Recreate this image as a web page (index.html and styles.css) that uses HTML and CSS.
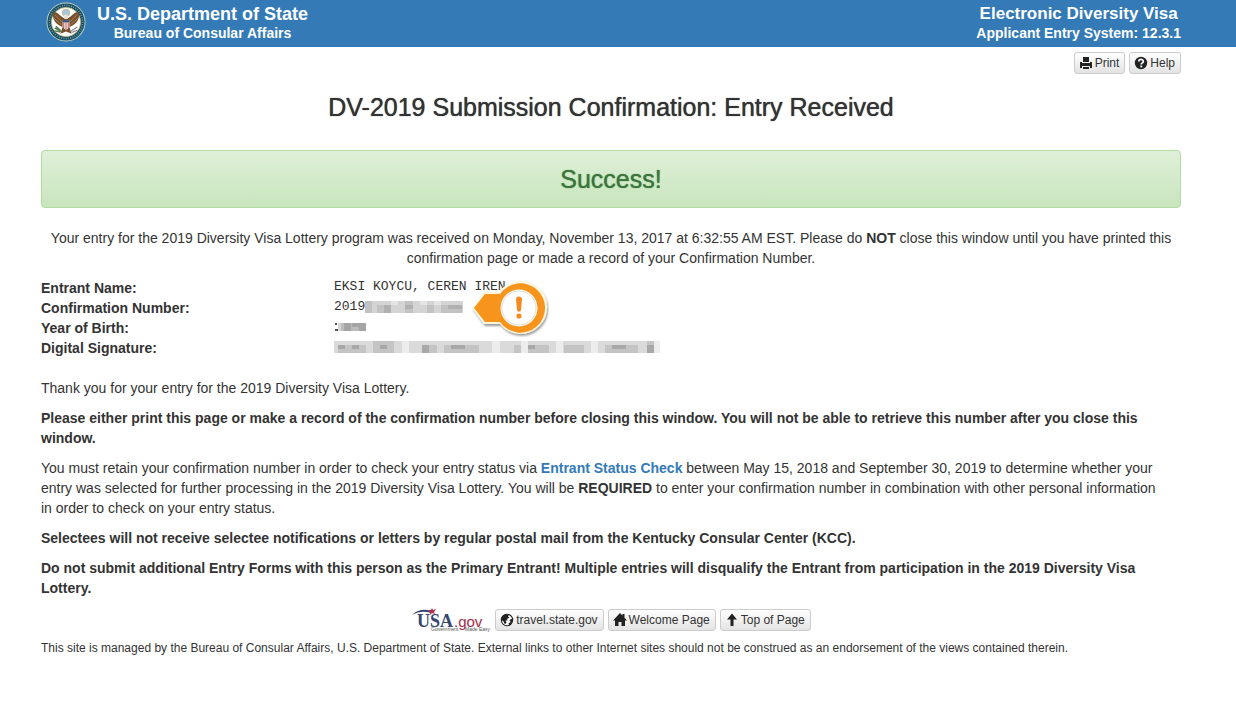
FILE: index.html
```html
<!DOCTYPE html>
<html lang="en">
  <head>
    <meta charset="UTF-8" />
    <meta name="viewport" content="width=device-width, initial-scale=1.0" />
    <title>Electronic Diversity Visa</title>
    <link rel="stylesheet" href="styles.css" />
  </head>
  <body>
    <header class="site-header" id="top">
      <div class="brand">
        <svg class="seal" viewBox="0 0 40 40" role="img" aria-label="Department of State seal">
          <circle cx="20" cy="20" r="19.5" fill="#c5d3c6" />
          <circle cx="20" cy="20" r="18.6" fill="#174e63" />
          <circle cx="20" cy="20" r="16.6" fill="none" stroke="#6f9c9b" stroke-width="1.6" stroke-dasharray="1 1.3" />
          <circle cx="20" cy="20" r="14.6" fill="#fff" stroke="#c9bd8b" stroke-width="0.8" />
          <g transform="translate(-2.6 -2.2) scale(1.13)">
            <circle cx="20" cy="11.5" r="3.3" fill="#a9c6dc" stroke="#c9b878" stroke-width="0.7" />
            <path d="M18 16 C15 15 12 10 9 11 C7 15 10 22 17 24 L15 30 L20 28 L25 30 L23 24 C30 22 33 15 31 11 C28 10 25 15 22 16 L20 13 Z" fill="#79502f" />
            <path d="M10 13 L17 20 M9 16 L16 22 M30 13 L23 20 M31 16 L24 22" stroke="#b38a52" stroke-width="0.8" />
            <path d="M18 14 L20 12.5 L22 14.5 L21.5 17 H18.5 Z" fill="#e9e4d5" />
            <path d="M17 18 H23 V24 L20 27 L17 24 Z" fill="#f2ecec" />
            <path d="M17 18 H23 V20 H17 Z" fill="#31517d" />
            <path d="M18 20 V25 M20 20 V27 M22 20 V25" stroke="#b94e45" stroke-width="0.8" />
            <path d="M10 25 L16 28 M10 27.5 L15 28.5 M11 23.5 L15 27" stroke="#4f7b4e" stroke-width="1.3" />
            <path d="M24 28 L30 24 M25 29 L30 27" stroke="#888" stroke-width="1" />
          </g>
        </svg>
        <div class="title-block">
          <div class="title">U.S. Department of State</div>
          <div class="subtitle">Bureau of Consular Affairs</div>
        </div>
      </div>
      <div class="title-block system">
        <div class="title">Electronic Diversity Visa</div>
        <div class="subtitle">Applicant Entry System: 12.3.1</div>
      </div>
    </header>

    <main>
      <div class="toolbar">
        <button type="button" class="btn">
          <svg class="icon" viewBox="0 0 14 14" aria-hidden="true">
            <path d="M4 1 H10 V6 H4 Z M1 6 H3 V7 H11 V6 H13 V12 H11 V10 H3 V12 H1 Z M4 11 H10 V13 H4 Z" fill="#222" />
          </svg>
          Print
        </button>
        <button type="button" class="btn">
          <svg class="icon" viewBox="0 0 14 14" aria-hidden="true">
            <circle cx="7" cy="7" r="6.2" fill="#222" />
            <path d="M4.8 5.6 C4.8 2.5 9.3 2.6 9.3 5.4 C9.3 7 7.2 6.8 7.2 8.6" fill="none" stroke="#fff" stroke-width="1.7" />
            <path d="M6.3 9.6 H8.2 V11.3 H6.3 Z" fill="#fff" />
          </svg>
          Help
        </button>
      </div>

      <h1 class="page-title">DV-2019 Submission Confirmation: Entry Received</h1>

      <div class="alert">
        <h2 class="alert-title">Success!</h2>
      </div>

      <p class="intro">
        Your entry for the 2019 Diversity Visa Lottery program was received on Monday, November 13, 2017 at 6:32:55 AM EST. Please do <strong>NOT</strong> close this window until you have printed this confirmation page or made a record of your Confirmation Number.
      </p>

      <dl class="details">
        <dt>Entrant Name:</dt>
        <dd>EKSI KOYCU, CEREN IREN</dd>
        <dt>Confirmation Number:</dt>
        <dd class="has-marker">
          2019<svg class="redacted" width="98" height="12" viewBox="0 0 98 12" aria-hidden="true">
            <path d="M0 0 H98 V12 H0 Z" fill="#d4d4d4" />
            <path d="M0 0 H7 V12 H0 Z M12 4 H26 V12 H12 Z M40 0 H48 V12 H40 Z M62 4 H69 V12 H62 Z M76 4 H97 V12 H76 Z" fill="#c2c2c2" />
            <path d="M19 4 H26 V12 H19 Z M40 4 H48 V8 H40 Z M83 4 H97 V8 H83 Z" fill="#b0b0b0" />
            <path d="M26 0 H33 V4 H26 Z M55 0 H62 V4 H55 Z M69 0 H76 V4 H69 Z" fill="#e5e5e5" />
          </svg>
          <svg class="marker" width="80" height="62" viewBox="0 0 80 62" role="img" aria-label="Attention">
            <defs>
              <filter id="shadow" x="-20%" y="-20%" width="140%" height="140%">
                <feDropShadow dx="1" dy="2" stdDeviation="1" flood-color="#000" flood-opacity="0.4" />
              </filter>
            </defs>
            <g filter="url(#shadow)">
              <path d="M3 31 L15 15 H30 A26.5 26.5 0 1 1 31 47 H15 Z" fill="#fff6df" />
              <path d="M5 31 L16 17 H31 A24.7 24.7 0 1 1 31 45 H16 Z" fill="#f7941e" />
            </g>
            <circle cx="50" cy="31" r="18.5" fill="#fff" />
            <circle cx="50" cy="31" r="17" fill="none" stroke="#e7dccb" stroke-width="1" />
            <path d="M47 22 C47 18.500 53 18.500 53 22 L52 33 C51.700 35 48.300 35 48 33 Z" fill="#f58a1f" />
            <circle cx="50" cy="39" r="2.6" fill="#f58a1f" />
          </svg>
        </dd>
        <dt>Year of Birth:</dt>
        <dd>
          <svg class="redacted" width="34" height="10" viewBox="0 0 34 10" aria-hidden="true">
            <path d="M1 1 H3 V3 H1 Z M1 7 H4 V9 H1 Z" fill="#555" />
            <path d="M4 1 H32 V9 H4 Z" fill="#bbb" />
            <path d="M10 1 H17 V9 H10 Z M18 1 H25 V5 H18 Z M25 1 H32 V9 H25 Z" fill="#a4a4a4" />
            <path d="M4 1 H7 V9 H4 Z" fill="#d5d5d5" />
          </svg>
        </dd>
        <dt>Digital Signature:</dt>
        <dd>
          <svg class="redacted" width="326" height="12" viewBox="0 0 326 12" aria-hidden="true">
            <path d="M0 0 H326 V12 H0 Z" fill="#dadada" />
            <path d="M4 4 H32 V12 H4 Z M39 0 H60 V12 H39 Z M88 4 H103 V12 H88 Z M110 4 H145 V12 H110 Z M180 4 H187 V12 H180 Z M194 4 H215 V12 H194 Z M230 4 H250 V12 H230 Z M271 4 H304 V12 H271 Z M313 0 H320 V12 H313 Z" fill="#c4c4c4" />
            <path d="M4 4 H11 V8 H4 Z M18 4 H25 V8 H18 Z M46 4 H53 V8 H46 Z M88 4 H95 V12 H88 Z M117 4 H131 V8 H117 Z M194 4 H201 V8 H194 Z M278 4 H292 V8 H278 Z M313 4 H320 V12 H313 Z" fill="#a8a8a8" />
            <path d="M68 0 H75 V12 H68 Z M158 0 H166 V12 H158 Z M187 0 H194 V12 H187 Z M222 0 H229 V12 H222 Z M257 0 H264 V12 H257 Z M320 0 H326 V12 H320 Z" fill="#ececec" />
          </svg>
        </dd>
      </dl>

      <div class="instructions">
        <p>Thank you for your entry for the 2019 Diversity Visa Lottery.</p>
        <p>
          <strong>Please either print this page or make a record of the confirmation number before closing this window. You will not be able to retrieve this number after you close this window.</strong>
        </p>
        <p>
          You must retain your confirmation number in order to check your entry status via <a href="#status">Entrant Status Check</a> between May 15, 2018 and September 30, 2019 to determine whether your entry was selected for further processing in the 2019 Diversity Visa Lottery. You will be <strong>REQUIRED</strong> to enter your confirmation number in combination with other personal information in order to check on your entry status.
        </p>
        <p>
          <strong>Selectees will not receive selectee notifications or letters by regular postal mail from the Kentucky Consular Center (KCC).</strong>
        </p>
        <p>
          <strong>Do not submit additional Entry Forms with this person as the Primary Entrant! Multiple entries will disqualify the Entrant from participation in the 2019 Diversity Visa Lottery.</strong>
        </p>
      </div>
    </main>

    <footer>
      <nav class="footer-links">
        <a class="usa-logo" href="#usa" aria-label="USA.gov">
          <svg width="80" height="24" viewBox="0 0 80 24" aria-hidden="true">
            <path d="M1 7 C7 1 14 1 20 3 L20 5 C14 3 8 3 1 7 Z" fill="#34466f" />
            <path d="M21 0 L22 2 L25 1 L23 4 L24 6 L21 5 L19 7 L19 4 L17 2 L20 2 Z" fill="#b5304f" />
            <text x="6" y="19" class="logo-usa">USA</text>
            <text x="43" y="19" class="logo-gov">.gov</text>
            <text x="20" y="23" class="logo-tag">Government</text>
            <text x="54" y="23" class="logo-tag">Made Easy</text>
          </svg>
        </a>
        <a class="btn" href="#travel">
          <svg class="icon" viewBox="0 0 14 14" aria-hidden="true">
            <circle cx="7" cy="7" r="5.7" fill="#fff" stroke="#222" stroke-width="1.1" />
            <path d="M1.5 5 C3 1.5 6 1 9 1.5 L8 3.5 L9.5 4.5 L7 6 L7.5 7.5 L5.5 7.5 L6.5 9.5 L5 11.5 L3.5 8.5 L1.5 7 Z M9.5 7 L12.5 5.5 C13 9 11 11.5 9 12.5 L8.5 10.5 L10.5 9 Z" fill="#222" />
          </svg>
          travel.state.gov
        </a>
        <a class="btn" href="#welcome">
          <svg class="icon" viewBox="0 0 14 14" aria-hidden="true">
            <path d="M7 0 L9.5 2.6 V1 H11.5 V4.7 L14 7.5 H12 V13 H8.5 V9 H5.5 V13 H2 V7.5 H0 Z" fill="#222" />
          </svg>
          Welcome Page
        </a>
        <a class="btn" href="#top">
          <svg class="icon" viewBox="0 0 14 14" aria-hidden="true">
            <path d="M7 0.5 L12 6.5 H8.5 V13 H5.5 V6.5 H2 Z" fill="#222" />
          </svg>
          Top of Page
        </a>
      </nav>
      <p class="notice">
        This site is managed by the Bureau of Consular Affairs, U.S. Department of State. External links to other Internet sites should not be construed as an endorsement of the views contained therein.
      </p>
    </footer>
  </body>
</html>
```
FILE: styles.css
```css
* {
  box-sizing: border-box;
}

body {
  margin: 0;
  font-family: "Liberation Sans", Arial, sans-serif;
  font-size: 14px;
  line-height: 20px;
  color: #333;
  background-color: #fff;
}

.site-header,
main,
footer {
  padding: 0 55px 0 41px;
}

.site-header {
  display: flex;
  justify-content: space-between;
  padding-top: 4px;
  padding-bottom: 5px;
  background-color: #337ab7;
  color: #fff;
}

.brand {
  display: flex;
  gap: 11px;
  padding-left: 5px;
}

.seal {
  width: 40px;
  height: 40px;
  margin: -2px 0;
}

.title-block {
  text-align: center;
  font-weight: bold;
}

.title {
  font-size: 18px;
  line-height: 20px;
}

.system .title {
  font-size: 17px;
}

.subtitle {
  font-size: 14px;
  line-height: 18px;
}

.toolbar {
  display: flex;
  justify-content: flex-end;
  gap: 4px;
  padding-top: 5px;
}

.btn {
  display: inline-flex;
  align-items: center;
  gap: 2px;
  height: 22px;
  padding: 0 5px 0 4px;
  border: 1px solid #ccc;
  border-radius: 3px;
  background: linear-gradient(#fff, #e3e3e3);
  font-family: inherit;
  font-size: 12px;
  line-height: 18px;
  color: #333;
  text-decoration: none;
  cursor: pointer;
}

.btn:hover {
  background: #e0e0e0;
}

.icon {
  width: 14px;
  height: 14px;
}

.page-title {
  margin: 20px 0 29px;
  font-size: 25px;
  line-height: 27px;
  font-weight: normal;
  text-align: center;
  text-shadow: 0 0 1px #333;
}

.alert {
  padding: 14px;
  border: 1px solid #b2dba1;
  border-radius: 4px;
  background: linear-gradient(#dff0d8, #c8e5bc);
  color: #3c763d;
  text-align: center;
}

.alert-title {
  margin: 0;
  font-size: 25px;
  line-height: 28px;
  font-weight: normal;
  text-shadow: 0 0 1px #3c763d;
}

p {
  margin: 0 0 10px;
}

.intro {
  margin-top: 20px;
  text-align: center;
}

.details {
  display: grid;
  grid-template-columns: 293px 1fr;
  margin: 0 0 20px;
}

dt {
  font-weight: bold;
}

dd {
  display: flex;
  align-items: center;
  height: 20px;
  margin: 0;
  padding-bottom: 3px;
  font-family: "Liberation Mono", monospace;
  font-size: 13px;
}

.redacted {
  flex: none;
}

.has-marker {
  position: relative;
}

.marker {
  position: absolute;
  left: 135px;
  top: -21px;
}

.instructions {
  padding-right: 12px;
}

a {
  color: #337ab7;
  font-weight: bold;
  text-decoration: none;
}

.footer-links {
  display: flex;
  justify-content: center;
  align-items: center;
  gap: 4px;
}

.footer-links .btn {
  font-weight: normal;
}

.usa-logo svg {
  display: block;
}

.logo-usa {
  font-family: "Liberation Serif", serif;
  font-size: 18px;
  font-weight: bold;
  fill: #34466f;
}

.logo-gov {
  font-size: 15px;
  font-weight: normal;
  fill: #a52a4a;
}

.logo-tag {
  font-size: 5px;
  font-weight: normal;
  fill: #555;
}

.notice {
  margin-top: 6px;
  font-size: 12px;
}
```
